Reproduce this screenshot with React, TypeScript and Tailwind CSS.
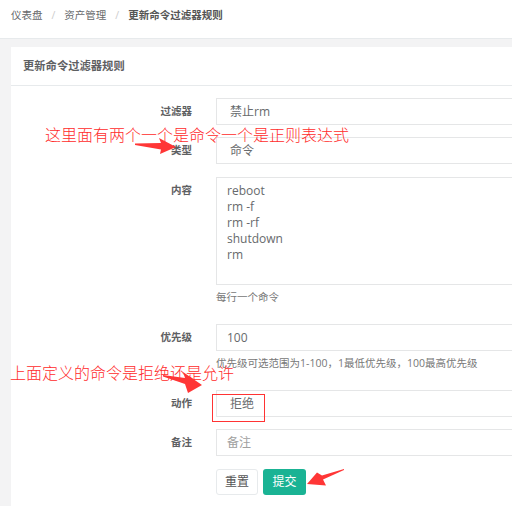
import React from 'react';

const labelCls = 'w-[181px] shrink-0 text-right text-[10.5px] font-bold leading-[27px] text-[#5e6062]';
const boxCls = 'ml-[24px] w-[340px] h-[27px] border border-[#e5e6e7] bg-white text-[12px] leading-[25px] text-[#676a6c]';
const helpCls = 'ml-[205px] mt-[4px] text-[10.5px] leading-[17px] text-[#777]';

const Row: React.FC<{ label: string; className?: string; children: React.ReactNode }> = ({ label, className, children }) => (
  <div className={'flex ' + (className || '')}>
    <div className={labelCls}>{label}</div>
    {children}
  </div>
);

const App: React.FC = () => {
  const commands = ['reboot', 'rm -f', 'rm -rf', 'shutdown', 'rm'];

  return (
    <div className="relative w-[512px] h-[506px] overflow-hidden bg-[#f3f3f4] font-['Open_Sans','Noto_Sans_CJK_SC',sans-serif] text-[#676a6c]">
      {/* breadcrumb */}
      <div className="h-[39px] bg-white border-b border-[#e7eaec] pl-[11px] pt-[7px] flex text-[10.5px] leading-[16px]">
        <span>仪表盘</span>
        <span className="mx-[9px] text-[#ccc]">/</span>
        <span>资产管理</span>
        <span className="mx-[9px] text-[#ccc]">/</span>
        <span className="font-bold text-[#555]">更新命令过滤器规则</span>
      </div>

      <div className="pl-[11px] pt-[8px]">
        <div className="w-[600px] bg-white">
          <div className="h-[39px] border-b border-[#e7eaec] pl-[12px] flex items-center text-[11.3px] font-bold text-[#5e6062]">
            更新命令过滤器规则
          </div>

          <div className="pt-[12px] pb-[20px]">
            <Row label="过滤器" className="mb-[12px]">
              <div className={boxCls + ' pl-[13px] bg-[#eeeeee]'}>禁止rm</div>
            </Row>
            <Row label="类型" className="mb-[13px]">
              <div className={boxCls + ' pl-[13px]'}>命令</div>
            </Row>
            <Row label="内容">
              <div className="ml-[24px] w-[340px] h-[108px] border border-[#e5e6e7] pl-[10px] pt-[5px] text-[12px] leading-[16px] text-[#676a6c]">
                {commands.map((c) => (
                  <div key={c}>{c}</div>
                ))}
              </div>
            </Row>
            <div className={helpCls}>每行一个命令</div>
            <Row label="优先级" className="mt-[18px]">
              <div className={boxCls + ' pl-[10px]'}>100</div>
            </Row>
            <div className={helpCls}>优先级可选范围为1-100，1最低优先级，100最高优先级</div>
            <Row label="动作" className="mt-[18px] mb-[12px]">
              <div className={boxCls + ' pl-[13px]'}>拒绝</div>
            </Row>
            <Row label="备注" className="mb-[13px]">
              <div className={boxCls + ' pl-[10px] text-[#a0a0a0]'}>备注</div>
            </Row>
            <div className="ml-[205px] flex">
              <button className="h-[26px] w-[42px] border border-[#e7eaec] bg-white rounded-[3px] text-[12px] text-[#555]">
                重置
              </button>
              <button className="ml-[5px] h-[26px] w-[43px] bg-[#1ab394] rounded-[3px] text-[12px] text-white">
                提交
              </button>
            </div>
          </div>
        </div>
      </div>

      {/* annotations */}
      <div className="absolute left-[212px] top-[394px] w-[53px] h-[28px] border border-[#ff3333]" />
      <div className="absolute left-[45px] top-[126px] text-[16px] leading-[16px] whitespace-nowrap text-[#ff2b2b] font-['Noto_Sans_CJK_SC',sans-serif] font-light">
        这里面有两个一个是命令一个是正则表达式
      </div>
      <div className="absolute left-[10px] top-[364px] text-[16px] leading-[16px] whitespace-nowrap text-[#ff2b2b] font-['Noto_Sans_CJK_SC',sans-serif] font-light">
        上面定义的命令是拒绝还是允许
      </div>
      <svg className="absolute left-0 top-0 pointer-events-none" width="512" height="506" viewBox="0 0 512 506">
        <polygon fill="#ff3636" points="135,143.5 161,143 159,138 176,147 160,154 161,149.5 135,145" />
        <polygon fill="#ff3636" points="163,375 185,378 183,372 202,385 188,393 185,384 163,376.5" />
        <polygon fill="#ff3636" points="344,469 322,475.5 317,472.5 307,484 326,485.5 323,479.5 344,470" />
      </svg>
    </div>
  );
};

export default App;
